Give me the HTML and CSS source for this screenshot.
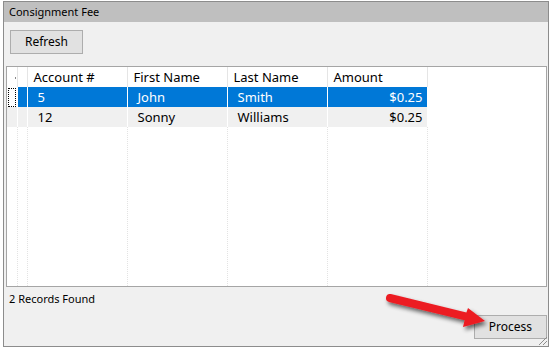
FILE: index.html
```html
<!DOCTYPE html>
<html lang="en">
<head>
    <meta charset="UTF-8">
    <title>Consignment Fee</title>
    <link rel="stylesheet" href="styles.css">
</head>
<body>

<div class="window">
    <div class="title-bar">Consignment Fee</div>

    <div class="content">
        <div class="toolbar">
            <button class="btn">Refresh</button>
        </div>

        <!-- Grilla de registros -->
        <div class="grid">
            <table>
                <colgroup>
                    <col class="c-sel">
                    <col class="c-sel">
                    <col class="c-data">
                    <col class="c-data">
                    <col class="c-data">
                    <col class="c-data">
                    <col>
                </colgroup>
                <thead>
                    <tr>
                        <th class="sel"><span class="sort-dot"></span></th>
                        <th class="sel"></th>
                        <th>Account #</th>
                        <th>First Name</th>
                        <th>Last Name</th>
                        <th>Amount</th>
                        <th class="filler"></th>
                    </tr>
                </thead>
                <tbody>
                    <tr class="selected">
                        <td class="sel focus"><span class="focus-box"></span></td>
                        <td class="sel"></td>
                        <td>5</td>
                        <td>John</td>
                        <td>Smith</td>
                        <td class="num">$0.25</td>
                        <td class="filler"></td>
                    </tr>
                    <tr class="alt">
                        <td class="sel"></td>
                        <td class="sel"></td>
                        <td>12</td>
                        <td>Sonny</td>
                        <td>Williams</td>
                        <td class="num">$0.25</td>
                        <td class="filler"></td>
                    </tr>
                    <tr class="empty">
                        <td class="sel"></td>
                        <td class="sel"></td>
                        <td></td>
                        <td></td>
                        <td></td>
                        <td></td>
                        <td class="filler"></td>
                    </tr>
                </tbody>
            </table>
        </div>

        <div class="footer">
            <div class="status">2 Records Found</div>
            <div class="actions">
                <button class="btn">Process</button>
            </div>
        </div>
    </div>

    <!-- Flecha roja sobre el botón -->
    <svg class="arrow" width="115" height="52" viewBox="0 0 115 52">
        <defs>
            <filter id="shadow" x="-20%" y="-40%" width="150%" height="200%">
                <feGaussianBlur in="SourceAlpha" stdDeviation="2"/>
                <feOffset dx="2" dy="3" result="b"/>
                <feComponentTransfer in="b" result="s">
                    <feFuncA type="linear" slope="0.6"/>
                </feComponentTransfer>
                <feMerge>
                    <feMergeNode in="s"/>
                    <feMergeNode in="SourceGraphic"/>
                </feMerge>
            </filter>
        </defs>
        <path filter="url(#shadow)" fill="#ec1c24"
              d="M8.9 6.1 L84.4 24.4 L86 20 L103 33 L81 39 L82.6 32.2 L7.1 13.9 A4 4 0 0 1 8.9 6.1 Z"/>
    </svg>

    <div class="grip"></div>
</div>

</body>
</html>
```
FILE: styles.css
```css
body {
    margin: 0;
    background-color: #ffffff;
    font-family: "Noto Sans", "Open Sans", sans-serif;
    color: #000;
}

.window {
    position: relative;
    margin: 1px 0 0 3px;
    width: 544px;
    height: 344px;
    border: 1px solid #8c8c8c;
    background-color: #f0f0f0;
    display: flex;
    flex-direction: column;
}

.title-bar {
    height: 20px;
    line-height: 20px;
    padding-left: 5px;
    background-color: #bfbfbf;
    font-size: 11px;
}

.content {
    flex: 1;
    display: flex;
    flex-direction: column;
    padding: 7px 1px 0 2px;
}

.toolbar {
    padding-left: 4px;
}

.btn {
    font-family: inherit;
    font-size: 12px;
    width: 73px;
    height: 24px;
    padding: 0;
    background-color: #e1e1e1;
    border: 1px solid #adadad;
    color: #000;
}

.grid {
    margin-top: 12px;
    height: 219px;
    border: 1px solid #a5a5a5;
    background-color: #fff;
}

table {
    width: 100%;
    height: 100%;
    border-collapse: collapse;
    table-layout: fixed;
    font-size: 13px;
}

col.c-sel {
    width: 10px;
}

col.c-data {
    width: 100px;
}

th, td {
    padding: 0;
    text-align: left;
    white-space: nowrap;
    overflow: hidden;
}

th {
    height: 20px;
    line-height: 18px;
    font-weight: normal;
    padding-left: 6px;
    border-right: 1px solid #e5e5e5;
}

th.sel {
    padding: 0;
    position: relative;
}

.sort-dot {
    position: absolute;
    right: 1px;
    top: 10px;
    width: 1px;
    height: 2px;
    background-color: #888;
}

td {
    height: 20px;
    line-height: 18px;
    padding-left: 10px;
    border-right: 1px dotted #e3e3e3;
}

td.sel {
    padding: 0;
}

td.num {
    text-align: right;
    padding-right: 4px;
}

td.filler, th.filler {
    border-right: none;
}

tr.selected td {
    background-color: #0078d7;
    color: #fff;
    border-right: 1px solid #fff;
}

tr.selected td.focus {
    background-color: #fff;
    position: relative;
}

tr.selected td.filler {
    background-color: #fff;
}

.focus-box {
    position: absolute;
    left: 1px;
    top: 1px;
    width: 6px;
    height: 17px;
    border: 1px dotted #000;
}

tr.alt td {
    background-color: #f0f0f0;
    border-right: 1px dotted #fff;
}

tr.alt td.filler {
    background-color: #fff;
}

tr.empty td {
    height: auto;
}

.footer {
    flex: 1;
    display: flex;
    flex-direction: column;
    padding: 4px 0 0 3px;
}

.status {
    font-size: 11px;
}

.actions {
    display: flex;
    justify-content: flex-end;
    margin-top: 9px;
}

.arrow {
    position: absolute;
    left: 378px;
    top: 286px;
}

.grip {
    position: absolute;
    right: 1px;
    bottom: 1px;
    width: 10px;
    height: 10px;
    background: repeating-linear-gradient(135deg, transparent 0 2px, #8c8c8c 2px 3px);
    clip-path: polygon(100% 0, 100% 100%, 0 100%);
}
```
